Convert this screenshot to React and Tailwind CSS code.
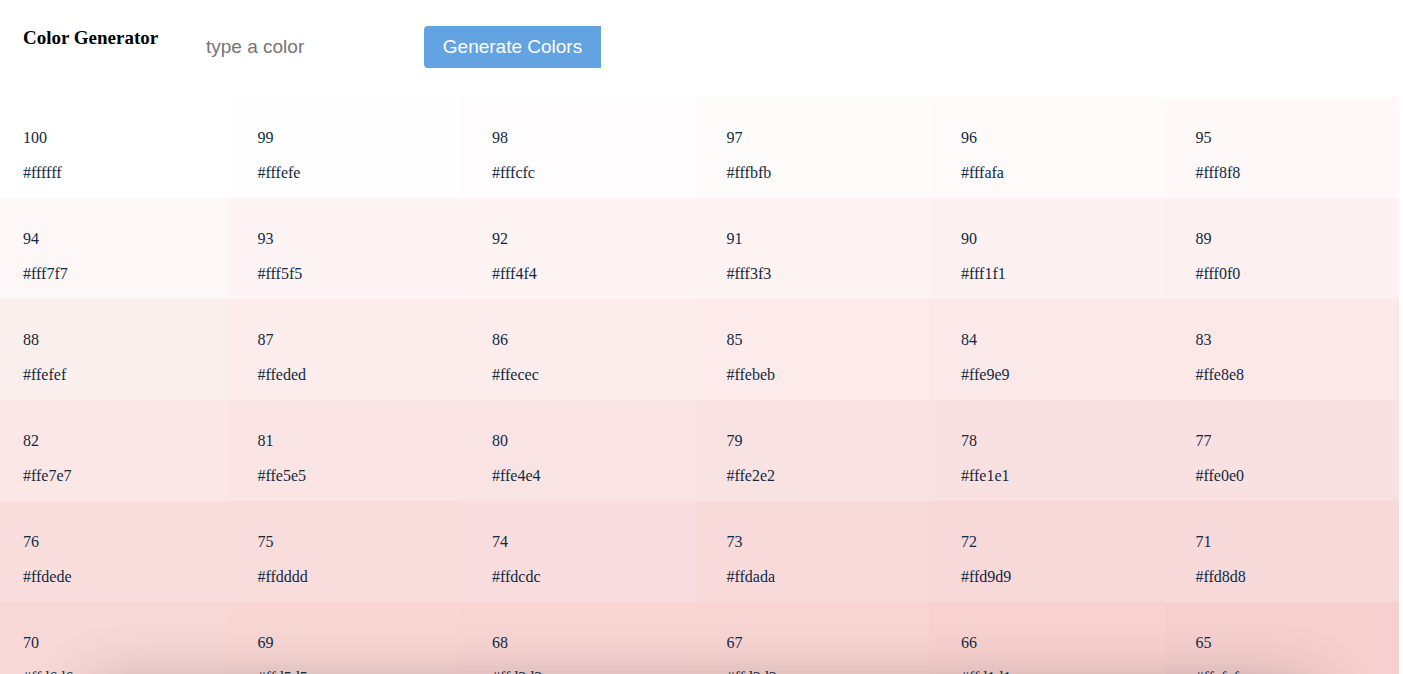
import { useState } from "react";

const swatches = [
  [100, "#ffffff", "#ffffff"], [99, "#fffefe", "#fefefe"], [98, "#fffcfc", "#fefcfd"],
  [97, "#fffbfb", "#fdfcfb"], [96, "#fffafa", "#fefafa"], [95, "#fff8f8", "#fef8f8"],
  [94, "#fff7f7", "#fdf7f7"], [93, "#fff5f5", "#fef4f5"], [92, "#fff4f4", "#fdf4f3"],
  [91, "#fff3f3", "#fcf3f2"], [90, "#fff1f1", "#fdf1f1"], [89, "#fff0f0", "#fcf0f0"],
  [88, "#ffefef", "#fbefed"], [87, "#ffeded", "#fcedec"], [86, "#ffecec", "#fcecec"],
  [85, "#ffebeb", "#fcebea"], [84, "#ffe9e9", "#fbe9e9"], [83, "#ffe8e8", "#fbe8e7"],
  [82, "#ffe7e7", "#fbe7e5"], [81, "#ffe5e5", "#fae5e4"], [80, "#ffe4e4", "#f9e4e3"],
  [79, "#ffe2e2", "#f8e3e2"], [78, "#ffe1e1", "#f9e1e1"], [77, "#ffe0e0", "#f8e1e0"],
  [76, "#ffdede", "#fadede"], [75, "#ffdddd", "#f9dddd"], [74, "#ffdcdc", "#f9dcdd"],
  [73, "#ffdada", "#f8dadb"], [72, "#ffd9d9", "#f8d9da"], [71, "#ffd8d8", "#f8d9da"],
  [70, "#ffd6d6", "#f8d8d6"], [69, "#ffd5d5", "#f8d6d4"], [68, "#ffd3d3", "#f8d4d3"],
  [67, "#ffd2d2", "#f8d4d2"], [66, "#ffd1d1", "#f8d2d0"], [65, "#ffcfcf", "#f6d0cf"],
];

function Swatch({ weight, hex, fill }) {
  return (
    <article
      className="flex flex-col gap-[17px] pt-8 pb-4 pl-[31px] text-base leading-[18px] text-[#102a42]"
      style={{ backgroundColor: fill }}
    >
      <p>{weight}</p>
      <p>{hex}</p>
    </article>
  );
}

export default function App() {
  const [color, setColor] = useState("");
  return (
    <div className="relative h-screen overflow-hidden bg-white font-['Liberation_Serif',serif]">
      <header className="flex items-start pt-[26px] pb-[29px] pl-[23px]">
        <h3 className="w-[165px] text-[19px] leading-6 font-bold text-black">Color Generator</h3>
        <form className="flex font-['Liberation_Sans',sans-serif]" onSubmit={(e) => e.preventDefault()}>
          <input
            type="text"
            aria-label="Color"
            placeholder="type a color"
            value={color}
            onChange={(e) => setColor(e.target.value)}
            className="h-[42px] w-[236px] bg-transparent px-[18px] text-[19px] text-black outline-none placeholder:text-[#757575]"
          />
          <button type="submit" className="h-[42px] min-w-[177px] rounded-l bg-[#63a3e1] px-[18px] text-[19px] text-white">
            Generate Colors
          </button>
        </form>
      </header>
      <section className="mr-1 -ml-2 grid grid-cols-6">
        {swatches.map(([weight, hex, fill]) => (
          <Swatch key={weight} weight={weight} hex={hex} fill={fill} />
        ))}
      </section>
      <div className="pointer-events-none absolute inset-x-24 -bottom-14 h-8 rounded-full shadow-[0_0_60px_12px_rgba(0,0,0,0.25)]" />
    </div>
  );
}
